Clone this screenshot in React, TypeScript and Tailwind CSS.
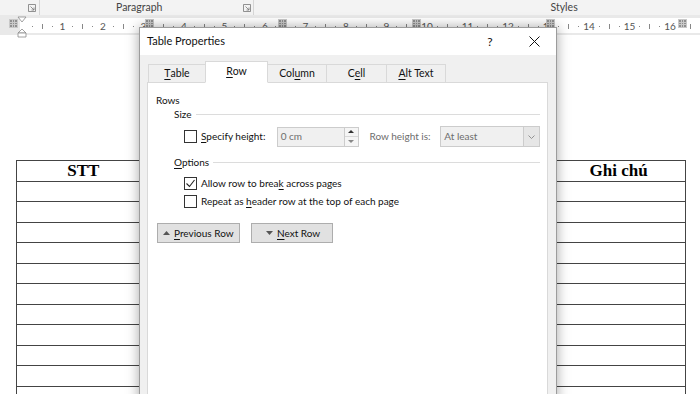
import React from 'react'

const ui = "font-['Lato','Noto_Sans',sans-serif]"

const Mn = ({ t, i }: { t: string; i: number }) => (
  <>
    {t.slice(0, i)}
    <span className="underline underline-offset-[2px]">{t[i]}</span>
    {t.slice(i + 1)}
  </>
)

const tabs = [
  { t: 'Table', i: 0, w: 'w-[58px]' },
  { t: 'Row', i: 0, w: 'w-[63px]', active: true },
  { t: 'Column', i: 3, w: 'w-[60px]' },
  { t: 'Cell', i: 1, w: 'w-[61px]' },
  { t: 'Alt Text', i: 0, w: 'w-[60px]' },
]

const Launcher = () => (
  <svg width="8" height="8" viewBox="0 0 8 8" className="text-[#777]">
    <path d="M0.5 0.5h7v7h-7z" fill="none" stroke="currentColor" strokeWidth="0.8" />
    <path d="M2.5 2.5l3.5 3.5M6 3.5v2.5h-2.5" fill="none" stroke="currentColor" strokeWidth="0.8" />
  </svg>
)

const ColMarker = () => (
  <div className="grid h-[9px] w-[9px] grid-cols-3 gap-px bg-[#c9c9c9] p-px">
    {Array.from({ length: 9 }, (_, k) => (
      <span key={k} className="bg-[#8f8f8f]" />
    ))}
  </div>
)

const Ruler = () => {
  const marks = Array.from({ length: 67 }, (_, k) => k + 1)
  const markers = [14, 150, 283, 417, 551, 683]
  return (
    <div className="relative h-[20px] bg-[#e9e9e9]">
      <div className="absolute left-[20px] right-0 top-[3px] bottom-[2px] bg-white" />
      <div className="relative flex h-full items-center pl-[27px] pt-[2px] text-[10px] text-[#555]">
        {marks.map((k) => (
          <div key={k} className="flex w-[10.125px] shrink-0 justify-center">
            {k % 4 === 0 ? (
              <span className="leading-none">{k / 4}</span>
            ) : k % 2 === 0 ? (
              <span className="h-[5px] w-px bg-[#888]" />
            ) : (
              <span className="h-px w-px bg-[#888]" />
            )}
          </div>
        ))}
      </div>
      {markers.map((x) => (
        <div key={x} className="absolute top-[4px]" style={{ left: x - 5 }}>
          <ColMarker />
        </div>
      ))}
      <svg width="10" height="22" viewBox="0 0 10 22" className="absolute left-[17px] top-[1px]">
        <path d="M1 1h8l-4 5z" fill="#fff" stroke="#8a8a8a" strokeWidth="0.8" />
        <path d="M5 13l4 4H1z" fill="#fff" stroke="#8a8a8a" strokeWidth="0.8" />
        <path d="M1 17h8v4H1z" fill="#fff" stroke="#8a8a8a" strokeWidth="0.8" />
      </svg>
    </div>
  )
}

const Check = ({ on }: { on?: boolean }) => (
  <span className="flex h-[13px] w-[13px] shrink-0 items-center justify-center border border-[#333] bg-white">
    {on && (
      <svg width="11" height="11" viewBox="0 0 11 11">
        <path d="M1.5 5.5l3 3 5-6.5" fill="none" stroke="#222" strokeWidth="1.1" />
      </svg>
    )}
  </span>
)

const Dialog = () => (
  <div
    className={`absolute left-[139px] top-[27px] flex h-[380px] w-[418px] flex-col border border-[#9c9c9c] bg-[#f0f0f0] text-[10px] text-[#111] shadow-[0_0_12px_rgba(0,0,0,0.35)] ${ui}`}
  >
    <div className="flex h-[27px] items-center bg-white pl-[7px]">
      <span className="flex-1 text-[11px]">Table Properties</span>
      <span className="flex h-full w-[44px] items-center justify-center text-[12px]">?</span>
      <span className="flex h-full w-[44px] items-center justify-center">
        <svg width="11" height="11" viewBox="0 0 11 11">
          <path d="M0.5 0.5l10 10M10.5 0.5l-10 10" stroke="#111" strokeWidth="1" />
        </svg>
      </span>
    </div>
    <div className="flex flex-1 flex-col pl-[7px] pr-[8px] pt-[6px]">
      <div className="relative z-10 -mb-px ml-px flex h-[22px] items-end text-[10.5px]">
        {tabs.map((tab, n) => (
          <div
            key={tab.t}
            className={`${tab.w} ${n > 0 ? '-ml-px' : ''} flex items-center justify-center border border-[#d9d9d9] ${
              tab.active ? 'relative h-[22px] border-b-white bg-white pb-px' : 'h-[19px] bg-[#f0f0f0]'
            }`}
          >
            <Mn t={tab.t} i={tab.i} />
          </div>
        ))}
      </div>
      <div className="flex flex-1 flex-col border border-[#d9d9d9] bg-white pl-[8px] pr-[7px] pt-[10px]">
        <div className="leading-[14px]">Rows</div>
        <div className="flex items-center pl-[18px] leading-[14px]">
          <span>Size</span>
          <span className="ml-[4px] h-px flex-1 bg-[#dcdcdc]" />
        </div>
        <div className="mt-[5px] flex h-[21px] items-center pl-[28px]">
          <div className="flex w-[93px] items-center gap-[4px]">
            <Check />
            <span>
              <Mn t="Specify height:" i={0} />
            </span>
          </div>
          <div className="flex h-[20px] w-[68px] items-center border border-[#cccccc] bg-[#f0f0f0] pl-[3px] text-[#6d6d6d]">
            0 cm
          </div>
          <div className="flex h-[20px] w-[14px] flex-col border border-l-0 border-[#cccccc] bg-[#f5f5f5]">
            <span className="flex flex-1 items-center justify-center border-b border-[#d8d8d8]">
              <svg width="6" height="3" viewBox="0 0 6 3">
                <path d="M0 3L3 0l3 3z" fill="#333" />
              </svg>
            </span>
            <span className="flex flex-1 items-center justify-center">
              <svg width="6" height="3" viewBox="0 0 6 3">
                <path d="M0 0h6L3 3z" fill="#888" />
              </svg>
            </span>
          </div>
          <span className="ml-[11px] w-[71px] text-[#6d6d6d]">Row height is:</span>
          <div className="flex h-[21px] w-[100px] items-center border border-[#cccccc] bg-[#f0f0f0] text-[#6d6d6d]">
            <span className="flex-1 pl-[3px]">At least</span>
            <span className="flex h-full w-[16px] items-center justify-center border-l border-[#cccccc] bg-[#e6e6e6]">
              <svg width="7" height="4" viewBox="0 0 7 4">
                <path d="M0.5 0.5l3 3 3-3" fill="none" stroke="#888" strokeWidth="0.9" />
              </svg>
            </span>
          </div>
        </div>
        <div className="mt-[8px] flex items-center pl-[18px] leading-[14px]">
          <span>
            <Mn t="Options" i={0} />
          </span>
          <span className="ml-[4px] h-px flex-1 bg-[#dcdcdc]" />
        </div>
        <div className="mt-[5px] flex h-[18px] items-center gap-[4px] pl-[28px]">
          <Check on />
          <span>
            <Mn t="Allow row to break across pages" i={17} />
          </span>
        </div>
        <div className="flex h-[18px] items-center gap-[4px] pl-[28px]">
          <Check />
          <span>
            <Mn t="Repeat as header row at the top of each page" i={10} />
          </span>
        </div>
        <div className="mt-[13px] flex gap-[11px] whitespace-nowrap pl-px">
          <button className="flex h-[20px] w-[83px] items-center gap-[4px] border border-[#adadad] bg-[#e1e1e1] pl-[5px]">
            <svg width="7" height="4" viewBox="0 0 7 4">
              <path d="M0 4L3.5 0 7 4z" fill="#555" />
            </svg>
            <span>
              <Mn t="Previous Row" i={0} />
            </span>
          </button>
          <button className="flex h-[20px] w-[82px] items-center gap-[4px] border border-[#adadad] bg-[#e1e1e1] pl-[14px]">
            <svg width="7" height="4" viewBox="0 0 7 4">
              <path d="M0 0h7L3.5 4z" fill="#555" />
            </svg>
            <span>
              <Mn t="Next Row" i={0} />
            </span>
          </button>
        </div>
      </div>
    </div>
  </div>
)

const headers = ['STT', '', '', '', 'Ghi chú']

export default function App() {
  return (
    <div className={`relative h-[394px] w-[700px] overflow-hidden bg-white ${ui}`}>
      <div className="flex h-[15px] items-center bg-[#f3f3f3] text-[10.5px] text-[#444]">
        <div className="flex w-[39px] justify-end pr-[3px]">
          <Launcher />
        </div>
        <span className="h-full w-px bg-[#d6d6d6]" />
        <span className="ml-[76px]">Paragraph</span>
        <div className="ml-[81px] flex w-[10px]">
          <Launcher />
        </div>
        <span className="h-full w-px bg-[#d6d6d6]" />
        <span className="ml-[296px]">Styles</span>
      </div>
      <Ruler />
      <div className="pl-[16px] pt-[125px]">
        <div className="w-[670px] border-l border-t border-[#444]">
          {Array.from({ length: 12 }, (_, r) => (
            <div key={r} className="grid h-[20.5px] grid-cols-5">
              {headers.map((h, c) => (
                <div
                  key={c}
                  className="flex items-center justify-center border-b border-r border-[#444] font-['Liberation_Serif',serif] text-[17px] font-bold leading-none text-black"
                >
                  {r === 0 ? h : ''}
                </div>
              ))}
            </div>
          ))}
        </div>
      </div>
      <Dialog />
    </div>
  )
}
